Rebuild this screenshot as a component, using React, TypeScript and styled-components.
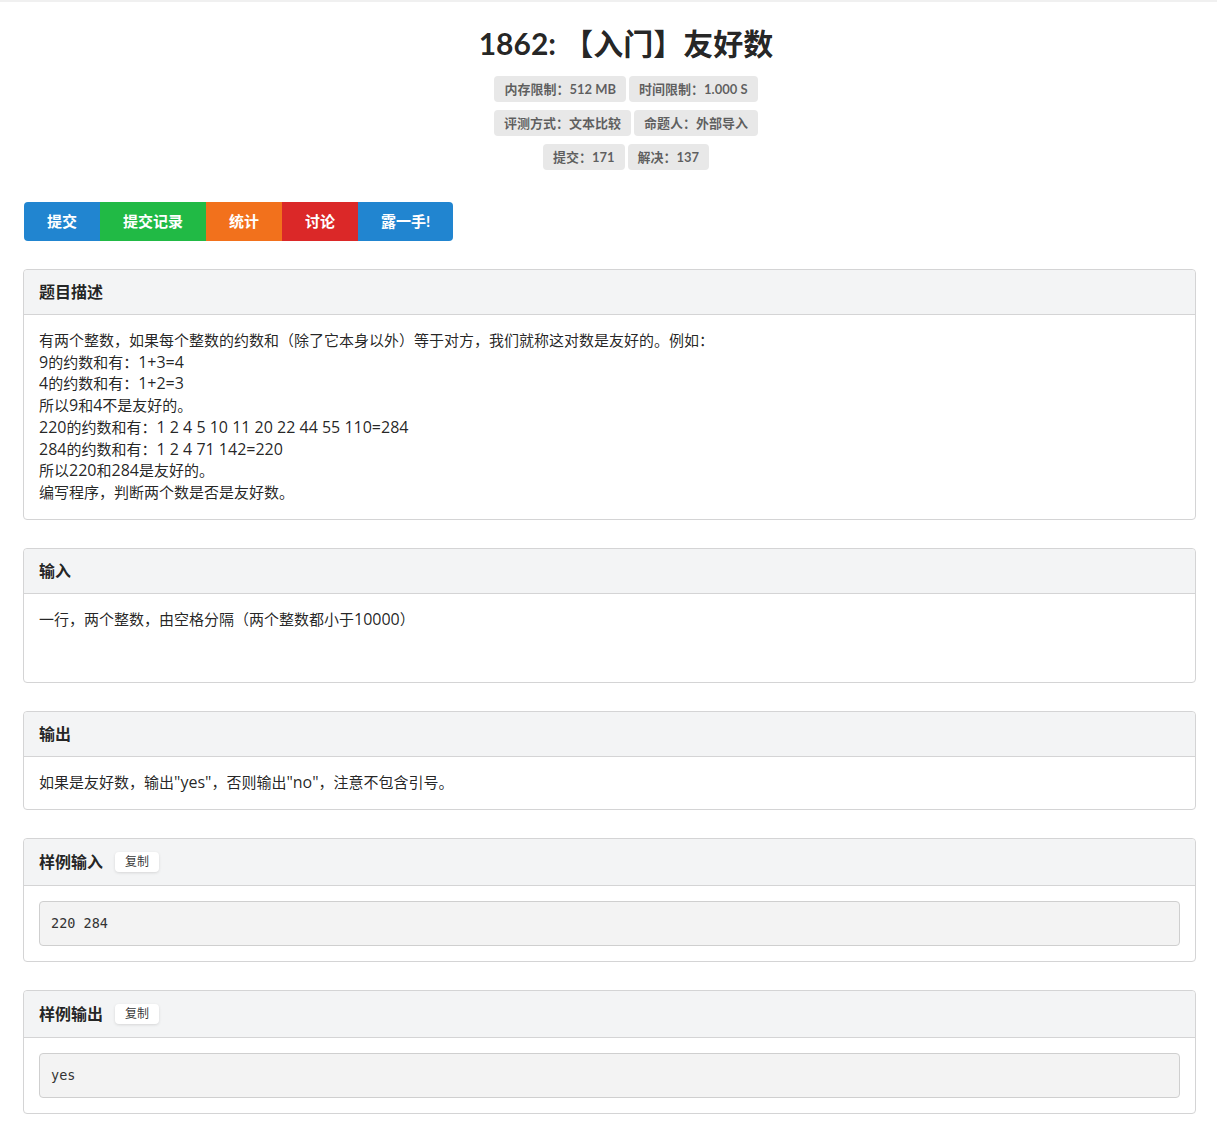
import React from 'react';
import styled, { createGlobalStyle } from 'styled-components';

const GlobalStyle = createGlobalStyle`
  html, body {
    margin: 0;
    padding: 0;
    background: #ffffff;
  }
  body {
    font-family: Lato, 'Noto Sans CJK SC', 'Helvetica Neue', Arial, sans-serif;
    font-size: 15px;
    line-height: 1.4444;
    color: rgba(0, 0, 0, 0.87);
  }
`;

const Page = styled.div`
  border-top: 2px solid #f0f0f0;
  padding: 0 21px 20px 23px;
`;

const Header = styled.div`
  display: flex;
  flex-direction: column;
  align-items: center;
  padding: 21px 0 0 33px;
`;

const Title = styled.h1`
  margin: 0 0 13px;
  font-size: 30px;
  font-weight: 700;
  line-height: 40px;
  color: rgba(0, 0, 0, 0.87);
`;

const LabelRow = styled.div`
  display: flex;
  gap: 3px;
  margin-bottom: 8px;
`;

const Label = styled.span`
  display: inline-flex;
  align-items: center;
  height: 26px;
  background: #e8e8e8;
  color: rgba(0, 0, 0, 0.6);
  font-size: 13px;
  font-weight: 700;
  padding: 0 10px;
  border-radius: 4px;
`;

const ButtonGroup = styled.div`
  display: inline-flex;
  margin: 24px 0 28px 1px;
  border-radius: 4px;
  overflow: hidden;
`;

const Button = styled.button<{ $color: string }>`
  background: ${(p) => p.$color};
  color: #ffffff;
  border: none;
  font-family: inherit;
  font-size: 15px;
  font-weight: 700;
  line-height: 19px;
  padding: 10px 23px;
  cursor: pointer;
`;

const Card = styled.div`
  border: 1px solid #d4d4d5;
  border-radius: 4px;
  margin-bottom: 28px;
`;

const CardHeader = styled.div`
  display: flex;
  align-items: center;
  gap: 12px;
  background: #f3f4f5;
  border-bottom: 1px solid #d4d4d5;
  border-radius: 4px 4px 0 0;
  padding: 12px 15px;
  font-size: 16px;
  font-weight: 700;
  line-height: 20px;
`;

const CopyTag = styled.span`
  background: #ffffff;
  color: rgba(0, 0, 0, 0.8);
  font-size: 12px;
  font-weight: 400;
  line-height: 20px;
  padding: 0 10px;
  margin: 1px 0;
  border-radius: 4px;
  box-shadow: 0 1px 3px rgba(0, 0, 0, 0.12);
`;

const CardBody = styled.div`
  padding: 15px;
  font-family: 'Open Sans', 'Noto Sans CJK SC', sans-serif;
  font-size: 15px;
  line-height: 21.7px;

  p {
    margin: 0 0 15px;
  }
  p:last-child {
    margin-bottom: 0;
  }
`;

// latin runs sit a touch larger than the CJK text around them
const Latin = styled.span`
  font-size: 16px;
`;

const Sample = styled.pre`
  margin: 0;
  background: #f3f3f3;
  border: 1px solid #cfcfcf;
  border-radius: 4px;
  padding: 11px 11px 12px;
  font-family: 'DejaVu Sans Mono', 'Liberation Mono', monospace;
  font-size: 13.5px;
  line-height: 20px;
  color: #333333;
`;

const mixed = (text: string) =>
  text.split(/([\x20-\x7e]+)/).map((part, i) =>
    /^[\x20-\x7e]+$/.test(part) ? <Latin key={i}>{part}</Latin> : part
  );

const buttons = [
  { text: '提交', color: '#2185d0' },
  { text: '提交记录', color: '#21ba45' },
  { text: '统计', color: '#f2711c' },
  { text: '讨论', color: '#db2828' },
  { text: '露一手!', color: '#2185d0' },
];

const description = [
  '有两个整数，如果每个整数的约数和（除了它本身以外）等于对方，我们就称这对数是友好的。例如：',
  '9的约数和有：1+3=4',
  '4的约数和有：1+2=3',
  '所以9和4不是友好的。',
  '220的约数和有：1 2 4 5 10 11 20 22 44 55 110=284',
  '284的约数和有：1 2 4 71 142=220',
  '所以220和284是友好的。',
  '编写程序，判断两个数是否是友好数。',
];

const App: React.FC = () => {
  return (
    <>
      <GlobalStyle />
      <Page>
        <Header>
          <Title>1862: 【入门】友好数</Title>
          <LabelRow>
            <Label>内存限制：512 MB</Label>
            <Label>时间限制：1.000 S</Label>
          </LabelRow>
          <LabelRow>
            <Label>评测方式：文本比较</Label>
            <Label>命题人：外部导入</Label>
          </LabelRow>
          <LabelRow>
            <Label>提交：171</Label>
            <Label>解决：137</Label>
          </LabelRow>
        </Header>

        <ButtonGroup>
          {buttons.map((b) => (
            <Button key={b.text} $color={b.color}>
              {b.text}
            </Button>
          ))}
        </ButtonGroup>

        <Card>
          <CardHeader>题目描述</CardHeader>
          <CardBody>
            {description.map((line) => (
              <div key={line}>{mixed(line)}</div>
            ))}
          </CardBody>
        </Card>

        <Card>
          <CardHeader>输入</CardHeader>
          <CardBody>
            <p>{mixed('一行，两个整数，由空格分隔（两个整数都小于10000）')}</p>
            <p>
              <br />
            </p>
          </CardBody>
        </Card>

        <Card>
          <CardHeader>输出</CardHeader>
          <CardBody>
            <p>{mixed('如果是友好数，输出"yes"，否则输出"no"，注意不包含引号。')}</p>
          </CardBody>
        </Card>

        <Card>
          <CardHeader>
            样例输入 <CopyTag>复制</CopyTag>
          </CardHeader>
          <CardBody>
            <Sample>220 284</Sample>
          </CardBody>
        </Card>

        <Card>
          <CardHeader>
            样例输出 <CopyTag>复制</CopyTag>
          </CardHeader>
          <CardBody>
            <Sample>yes</Sample>
          </CardBody>
        </Card>
      </Page>
    </>
  );
};

export default App;
